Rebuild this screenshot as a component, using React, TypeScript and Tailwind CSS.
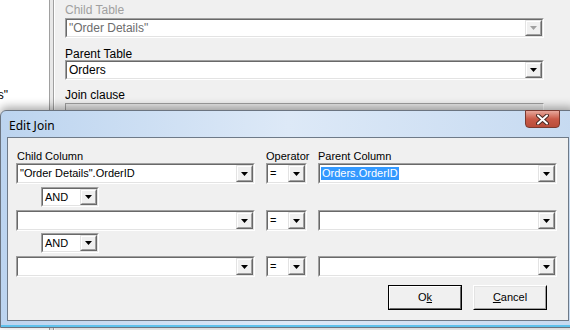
import React from "react";

function Arrow({ disabled }: { disabled?: boolean }) {
  return (
    <svg width="7" height="4" viewBox="0 0 7 4" className="block">
      <path d="M0 0H7L3.5 4Z" fill={disabled ? "#a0a0a0" : "#000"} />
    </svg>
  );
}

function DropBtn({ disabled }: { disabled?: boolean }) {
  return (
    <div className="w-[17px] h-full border border-t-[#e3e3e3] border-l-[#e3e3e3] border-b-[#696969] border-r-[#696969]">
      <div className="w-full h-full flex items-center justify-center bg-[#f0f0f0] border border-t-white border-l-white border-b-[#a0a0a0] border-r-[#a0a0a0]">
        <Arrow disabled={disabled} />
      </div>
    </div>
  );
}

function Combo({
  className = "",
  text = "",
  disabled,
  selected,
}: {
  className?: string;
  text?: string;
  disabled?: boolean;
  selected?: boolean;
}) {
  return (
    <div
      className={`flex shrink-0 border border-t-[#a0a0a0] border-l-[#a0a0a0] border-b-white border-r-white ${className}`}
    >
      <div className="flex flex-1 min-w-0 bg-white border border-t-[#696969] border-l-[#696969] border-b-[#e3e3e3] border-r-[#e3e3e3]">
        <div className="flex-1 min-w-0 flex items-center pl-[1px] overflow-hidden whitespace-nowrap">
          {selected ? (
            <span className="bg-[#3399ff] text-white px-[1px] leading-[13px]">{text}</span>
          ) : (
            <span className={`px-[1px] leading-[13px] ${disabled ? "text-[#6d6d6d]" : "text-black"}`}>{text}</span>
          )}
        </div>
        <DropBtn disabled={disabled} />
      </div>
    </div>
  );
}

function Button({ children, def }: { children: React.ReactNode; def?: boolean }) {
  return (
    <div
      className={`w-[74px] h-[25px] ${def ? "border border-black" : "border border-t-white border-l-white border-b-black border-r-black"}`}
    >
      <div
        className={`w-full h-full ${def ? "border border-t-white border-l-white border-b-[#696969] border-r-[#696969]" : "border border-t-[#e3e3e3] border-l-[#e3e3e3] border-b-[#a0a0a0] border-r-[#a0a0a0]"}`}
      >
        <div className="w-full h-full flex items-center justify-center bg-[#f0f0f0] text-black">
          {children}
        </div>
      </div>
    </div>
  );
}

export default function App() {
  return (
    <div className="relative w-[570px] h-[330px] overflow-hidden bg-white text-[11px] leading-[13px] text-black font-['Liberation_Sans',Arial,sans-serif]">
      {/* Background window */}
      <div className="flex h-full">
        <div className="w-[49px] shrink-0 bg-white overflow-hidden">
          <div className="mt-[88px] w-[49px] pr-[41px] flex justify-end whitespace-nowrap text-[12px] leading-[14px]">
            <span className="shrink-0">Order Details"</span>
          </div>
        </div>
        <div className="w-px bg-[#a0a0a0]" />
        <div className="w-[3px] bg-[#e8e8e8]" />
        <div className="w-px bg-[#a0a0a0]" />
        <div className="w-px bg-white" />
        <div className="flex-1 bg-[#f0f0f0] pl-[10px] pr-[26px] pt-[3px] text-[12px] leading-[14px]">
          <div className="text-[#a0a0a0] h-[15px]">Child Table</div>
          <Combo className="h-[20px] w-full" text={'"Order Details"'} disabled />
          <div className="mt-[9px] h-[13px]">Parent Table</div>
          <Combo className="h-[20px] w-full" text="Orders" />
          <div className="mt-[8px] h-[13px]">Join clause</div>
          <div className="mt-[2px] h-[20px] border border-t-[#a0a0a0] border-l-[#a0a0a0] border-b-white border-r-white bg-[#e8e8e8]" />
        </div>
      </div>

      {/* Edit Join dialog */}
      <div className="absolute left-0 top-[110px] w-[576px] h-[218px] rounded-t-[6px] border border-[#6b7480] bg-gradient-to-r from-[#bcd4ef] via-[#dde9f7] to-[#c6daf1] shadow-[0_-3px_10px_rgba(0,0,0,0.35)] flex flex-col">
        <div className="h-[26px] relative flex items-start">
          <span className="ml-[8px] mt-[8px] text-[12px] leading-[14px] text-black font-['Noto_Sans',sans-serif]">
            Edit Join
          </span>
          <div className="absolute left-[524px] top-[-1px] w-[35px] h-[18px] rounded-b-[4px] border border-[#7a3a30] bg-gradient-to-b from-[#e6a89c] via-[#c95a48] to-[#b94d3a] flex items-center justify-center">
            <svg width="13" height="11" viewBox="0 0 13 11">
              <path
                d="M2 1.5L11 9.5M11 1.5L2 9.5"
                stroke="#4a2a24"
                strokeWidth="4"
                strokeLinecap="round"
              />
              <path
                d="M2 1.5L11 9.5M11 1.5L2 9.5"
                stroke="#ffffff"
                strokeWidth="2"
                strokeLinecap="round"
              />
            </svg>
          </div>
        </div>
        <div className="mx-[6px] border border-[#6e7a88] bg-[#f0f0f0] h-[184px] pl-[8px] pt-[12px]">
          <div className="flex h-[13px]">
            <div className="w-[250px] pl-[1px]">Child Column</div>
            <div className="w-[52px]">Operator</div>
            <div>Parent Column</div>
          </div>
          <div className="flex gap-[11px]">
            <Combo className="h-[21px] w-[239px]" text={'"Order Details".OrderID'} />
            <Combo className="h-[21px] w-[41px]" text="=" />
            <Combo className="h-[21px] w-[239px]" text="Orders.OrderID" selected />
          </div>
          <div className="mt-[3px] pl-[25px]">
            <Combo className="h-[20px] w-[58px]" text="AND" />
          </div>
          <div className="mt-[3px] flex gap-[11px]">
            <Combo className="h-[21px] w-[239px]" />
            <Combo className="h-[21px] w-[41px]" text="=" />
            <Combo className="h-[21px] w-[239px]" />
          </div>
          <div className="mt-[2px] pl-[25px]">
            <Combo className="h-[20px] w-[58px]" text="AND" />
          </div>
          <div className="mt-[3px] flex gap-[11px]">
            <Combo className="h-[21px] w-[239px]" />
            <Combo className="h-[21px] w-[41px]" text="=" />
            <Combo className="h-[21px] w-[239px]" />
          </div>
          <div className="mt-[8px] flex gap-[11px] pl-[372px]">
            <Button def>
              <span>
                O<span className="underline">k</span>
              </span>
            </Button>
            <Button>
              <span>
                <span className="underline">C</span>ancel
              </span>
            </Button>
          </div>
        </div>
        <div className="flex-1 border-b-2 border-b-[#5fc2ec]" />
      </div>
    </div>
  );
}
